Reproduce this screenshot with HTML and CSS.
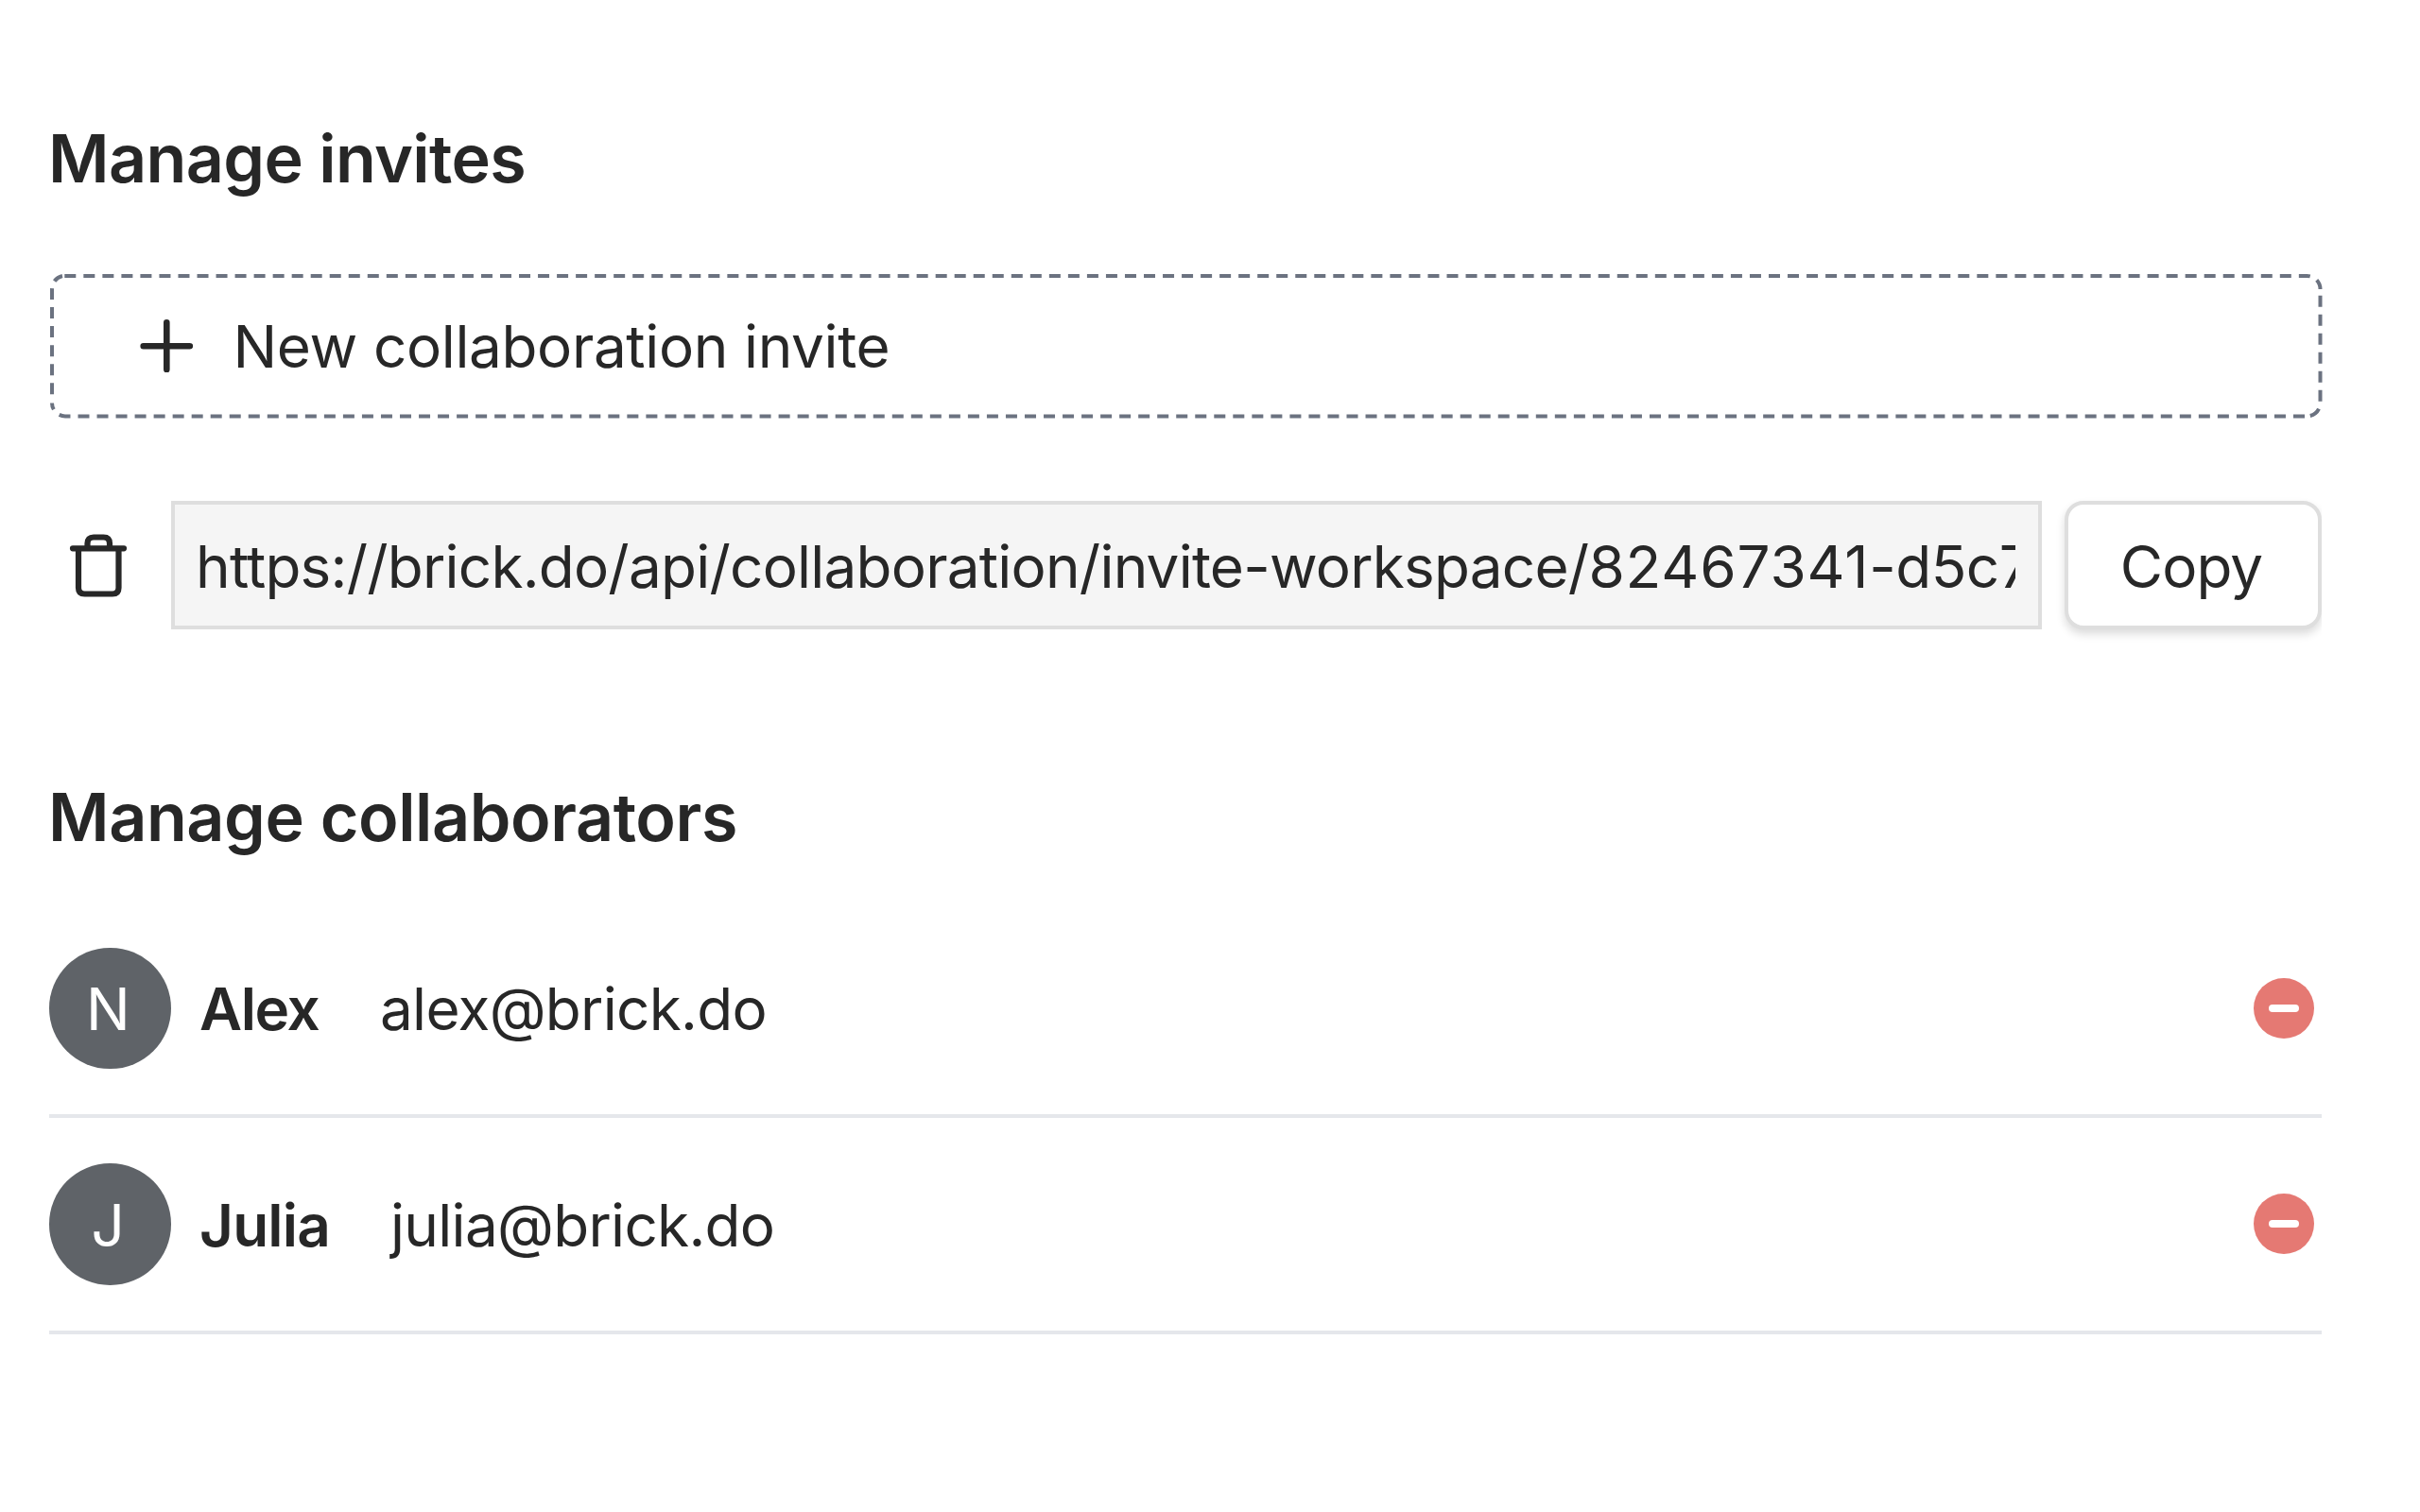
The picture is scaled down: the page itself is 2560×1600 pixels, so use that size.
FILE: index.html
```html
<!DOCTYPE html>
<html lang="en">
<head>
<meta charset="utf-8">
<title>Manage collaboration</title>
<link rel="stylesheet" href="styles.css">
</head>
<body>
<main class="page">
  <h2 class="title title-invites">Manage invites</h2>
  <button class="new-invite" type="button">
    <svg class="dashes" viewBox="0 0 2404 152" aria-hidden="true">
      <path d="M16.3 2H2388.5A14 14 0 0 1 2402.5 16"/>
      <path d="M2402.5 22.7V136.4A14 14 0 0 1 2388.5 150.4"/>
      <path d="M2386 150.4H17A14 14 0 0 1 3 136.4"/>
      <path d="M3 127.2V16A14 14 0 0 1 14 2"/>
    </svg>
    <svg class="plus" viewBox="0 0 56 56" aria-hidden="true"><path d="M3.7 28.2H52.9M28.3 3.3V53.1"/></svg>
    <span class="new-label">New collaboration invite</span>
  </button>
  <div class="invite">
    <button class="trash" type="button" aria-label="Delete invite">
      <svg class="trash-icon" viewBox="0 0 62 68" aria-hidden="true"><path d="M4 16.3H58M10 16.3V58Q10 64.5 16.5 64.5H46Q52.5 64.5 52.5 58V16.3M19.5 16.3V11Q19.5 4.5 26 4.5H36.5Q43 4.5 43 11V16.3"/></svg>
    </button>
    <div class="link"><span class="link-text"><span class="link-path">https://brick.do/api/collaboration/invite-workspace/</span><span class="link-id">82467341</span>-d5c7</span></div>
    <div class="copy-wrap"><button class="copy" type="button">Copy</button></div>
  </div>
  <h2 class="title title-people">Manage collaborators</h2>
  <ul class="people">
    <li class="person">
      <span class="avatar">N</span>
      <span class="name name-alex">Alex</span>
      <span class="email">alex@brick.do</span>
      <button class="remove" type="button" aria-label="Remove Alex"><span class="bar"></span></button>
    </li>
    <li class="person">
      <span class="avatar">J</span>
      <span class="name name-julia">Julia</span>
      <span class="email">julia@brick.do</span>
      <button class="remove" type="button" aria-label="Remove Julia"><span class="bar"></span></button>
    </li>
  </ul>
</main>
</body>
</html>
```
FILE: styles.css
```css
* { box-sizing: border-box; }
body {
  margin: 0;
  background: #fff;
  color: #272727;
  font: 400 62px/100px Inter, "Liberation Sans", sans-serif;
}
button {
  margin: 0;
  padding: 0;
  border: 0;
  background: none;
  color: inherit;
  font: inherit;
}
.page {
  width: 2456px;
  padding: 118px 0 0 52px;
}
.title {
  margin: 0 0 0 -1px;
  font-size: 70px;
  font-weight: 600;
  line-height: 100px;
}
.title-invites { letter-spacing: -0.63px; }
.title-people { margin-top: 149px; letter-spacing: -0.42px; }

.new-invite {
  position: relative;
  display: flex;
  align-items: center;
  width: 2404px;
  height: 152px;
  margin-top: 72px;
  padding-left: 96px;
}
.dashes {
  position: absolute;
  inset: 0;
  width: 2404px;
  height: 152px;
  overflow: visible;
  fill: none;
  stroke: #6b7280;
  stroke-width: 4;
  stroke-dasharray: 12 8.03;
}
.plus {
  width: 56px;
  height: 56px;
  fill: none;
  stroke: #272727;
  stroke-width: 6.6;
  stroke-linecap: round;
}
.new-label {
  margin-left: 42.5px;
  padding-top: 1px;
  letter-spacing: -0.37px;
}

.invite {
  display: flex;
  height: 136px;
  margin-top: 88px;
}
.trash {
  display: flex;
  align-items: center;
  width: 129px;
  padding-left: 21px;
}
.trash-icon {
  width: 62px;
  height: 68px;
  fill: none;
  stroke: #272727;
  stroke-width: 6.2;
  stroke-linecap: round;
}
.link {
  display: flex;
  align-items: center;
  width: 1979px;
  padding: 3px 24px 0 22px;
  border: 4px solid #dedede;
  background: #f5f5f5;
}
.link-text {
  flex: 1;
  min-width: 0;
  overflow: hidden;
  white-space: nowrap;
  letter-spacing: -0.55px;
}
.link-path { letter-spacing: -0.77px; }
.link-id { letter-spacing: 0.85px; }
.copy-wrap {
  width: 296px;
  margin: -20px 0 -40px;
  padding: 20px 0 40px 24px;
  overflow: hidden;
}
.copy {
  width: 272px;
  height: 136px;
  padding: 3px 4px 0 0;
  border: 4px solid #dedede;
  border-radius: 20px;
  background: #fff;
  box-shadow: 0 5px 10px rgba(0, 0, 0, 0.14);
  letter-spacing: -0.9px;
}

.people {
  margin: 39.5px 0 0;
  padding: 0;
  list-style: none;
}
.person {
  display: flex;
  align-items: center;
  height: 228.5px;
  border-bottom: 4px solid #e5e7eb;
}
.avatar {
  width: 128.5px;
  height: 128.5px;
  padding: 1.5px 4px 0 0;
  border-radius: 50%;
  background: #5f6368;
  color: #fff;
  line-height: 128px;
  text-align: center;
}
.name {
  padding-top: 3px;
  font-weight: 600;
}
.name-alex { width: 191px; margin-left: 30.5px; letter-spacing: -1.4px; }
.name-julia { width: 202px; margin-left: 30.5px; letter-spacing: -0.8px; }
.email {
  padding-top: 3px;
  letter-spacing: -0.7px;
}
.remove {
  display: flex;
  align-items: center;
  justify-content: center;
  width: 64px;
  height: 64px;
  margin: 0 8px 0 auto;
  border-radius: 50%;
  background: #e57973;
}
.bar {
  width: 32px;
  height: 8px;
  border-radius: 4px;
  background: #fff;
}
```
